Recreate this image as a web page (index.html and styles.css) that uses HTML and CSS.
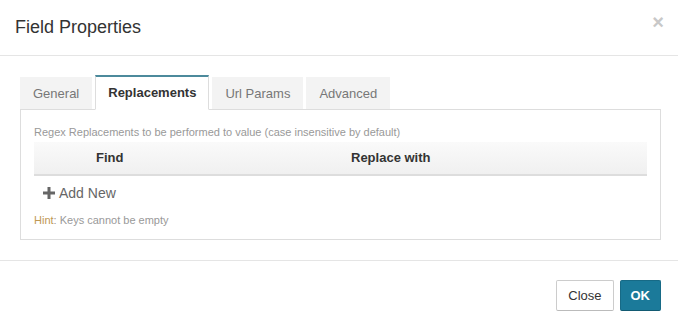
FILE: index.html
```html
<!DOCTYPE html>
<html>
<head>
<meta charset="utf-8">
<link rel="stylesheet" href="styles.css">
</head>
<body>
<div class="modal">
  <div class="modal-header">
    <h4 class="title">Field Properties</h4>
    <span class="close">×</span>
  </div>
  <div class="modal-body">
    <ul class="tabs">
      <li class="tab">General</li>
      <li class="tab active">Replacements</li>
      <li class="tab">Url Params</li>
      <li class="tab">Advanced</li>
    </ul>
    <div class="tab-content">
      <p class="desc">Regex Replacements to be performed to value (case insensitive by default)</p>
      <div class="table-head">
        <div class="col-act"></div>
        <div class="col-find">Find</div>
        <div class="col-repl">Replace with</div>
      </div>
      <div class="add-new">
        <svg class="plus" width="12" height="12" viewBox="0 0 12 12"><path d="M4.5 0h3v4.5H12v3H7.5V12h-3V7.5H0v-3h4.5z" fill="#666"/></svg>
        <span>Add New</span>
      </div>
      <p class="hint"><span class="hint-label">Hint</span>: Keys cannot be empty</p>
    </div>
  </div>
  <div class="modal-footer">
    <button class="btn btn-default">Close</button>
    <button class="btn btn-primary">OK</button>
  </div>
</div>
</body>
</html>
```

FILE: styles.css
```css
* { box-sizing: border-box; }
html, body { margin: 0; padding: 0; background: #fff; }
body {
  font-family: "Liberation Sans", Arial, sans-serif;
  color: #333;
  width: 678px;
  height: 332px;
  overflow: hidden;
}
.modal { display: flex; flex-direction: column; width: 678px; }
.modal-header {
  height: 56px;
  border-bottom: 1px solid #e5e5e5;
  display: flex;
  align-items: center;
  justify-content: space-between;
  padding: 0 14px 2px 15px;
}
.title {
  margin: 0;
  font-size: 18px;
  font-weight: normal;
  color: #333;
  line-height: 20px;
}
.close {
  font-size: 20px;
  font-weight: bold;
  color: #c8c8c8;
  line-height: 20px;
  margin-top: -10px;
}
.modal-body {
  padding: 19px 17px 20px 20px;
  height: 204px;
}
.tabs {
  list-style: none;
  margin: 0;
  padding: 0;
  display: flex;
  gap: 3px;
  align-items: flex-end;
  position: relative;
  z-index: 1;
  margin-bottom: -1px;
}
.tab {
  font-size: 13px;
  color: #777;
  background: #f3f3f3;
  height: 33px;
  line-height: 33px;
  padding: 0 13px;
  border-bottom: 1px solid #ddd;
}
.tab.active {
  background: #fff;
  color: #333;
  font-weight: bold;
  border: 1px solid #ddd;
  border-top: 2px solid #4c8a9c;
  border-bottom-color: #fff;
  height: 35px;
  line-height: 31px;
  padding: 0 12px;
}
.tab-content {
  border: 1px solid #ddd;
  height: 131px;
  padding: 15px 13px 0 13px;
}
.desc {
  margin: 0;
  font-size: 11px;
  line-height: 14px;
  color: #999;
}
.table-head {
  margin-top: 3px;
  height: 34px;
  display: grid;
  grid-template-columns: 54px 255px 1fr;
  background: linear-gradient(#fafafa, #f0f0f0);
  border-bottom: 2px solid #ddd;
  font-size: 13px;
  font-weight: bold;
  color: #333;
  line-height: 32px;
}
.col-find, .col-repl { padding-left: 8px; }
.add-new {
  display: flex;
  align-items: center;
  gap: 4px;
  padding-left: 9px;
  margin-top: 7px;
  height: 20px;
  font-size: 14px;
  color: #666;
}
.plus { display: block; }
.hint {
  margin: 10px 0 0 0;
  font-size: 11px;
  line-height: 14px;
  color: #999;
}
.hint-label { color: #c09853; }
.modal-footer {
  border-top: 1px solid #e5e5e5;
  height: 72px;
  display: flex;
  justify-content: flex-end;
  align-items: flex-start;
  gap: 6px;
  padding: 19px 17px 0 0;
}
.btn {
  font-family: "Liberation Sans", Arial, sans-serif;
  font-size: 13px;
  height: 31px;
  line-height: 17px;
  padding: 6px 11px;
  border-radius: 2px;
  cursor: pointer;
}
.btn-default {
  background: #fff;
  color: #333;
  border: 1px solid #ccc;
  border-bottom-color: #bbb;
}
.btn-primary {
  background: #1b7a9a;
  color: #fff;
  font-weight: bold;
  border: 1px solid #176a86;
  border-bottom-color: #125a72;
  padding: 6px 10px;
}
```
